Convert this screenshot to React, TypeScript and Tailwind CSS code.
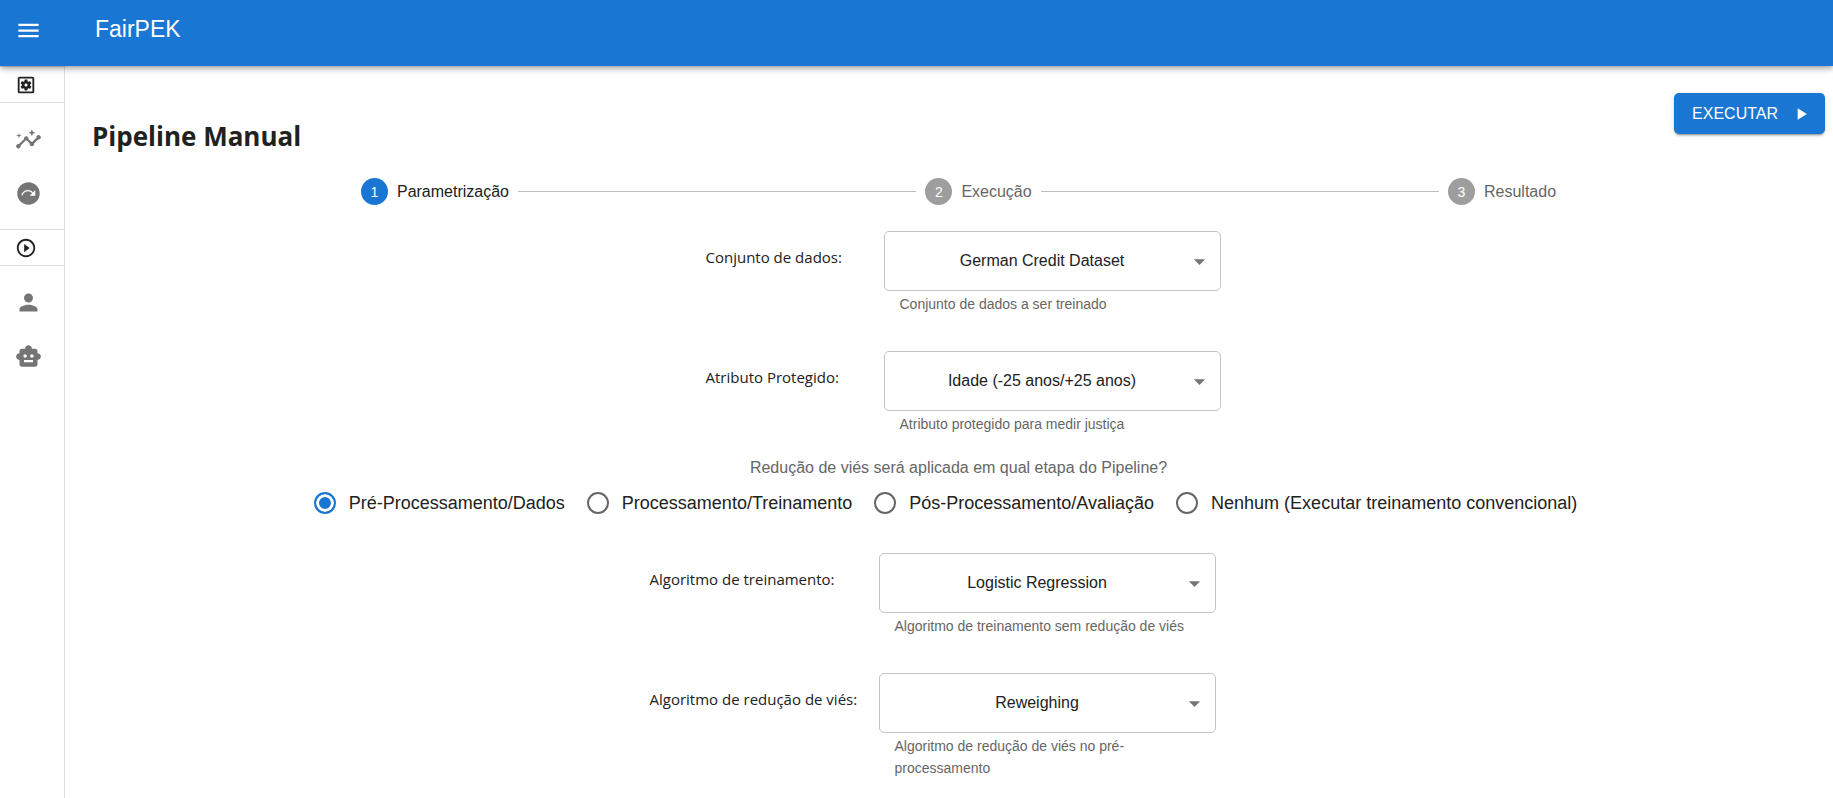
import { useState } from "react";
import type { ReactNode } from "react";
import {
  MdArrowDropDown,
  MdInsights,
  MdMenu,
  MdNextPlan,
  MdOutlineSettingsApplications,
  MdPerson,
  MdPlayArrow,
  MdPlayCircleOutline,
  MdSmartToy,
} from "react-icons/md";

const steps = ["Parametrização", "Execução", "Resultado"];

const stages = [
  "Pré-Processamento/Dados",
  "Processamento/Treinamento",
  "Pós-Processamento/Avaliação",
  "Nenhum (Executar treinamento convencional)",
];

function SideSection({ icon, label }: { icon: ReactNode; label: string }) {
  return (
    <button
      type="button"
      aria-label={label}
      className="flex h-[35px] w-full items-center pl-[15px] text-[22px] text-[#212121]"
    >
      {icon}
    </button>
  );
}

function SideLink({ icon, label }: { icon: ReactNode; label: string }) {
  return (
    <a
      href="#"
      aria-label={label}
      className="flex h-[54px] items-center pl-[15px] text-[27px] text-[#757575]"
    >
      {icon}
    </a>
  );
}

function Sidebar() {
  return (
    <nav className="w-[65px] shrink-0 border-r border-[#dedede] bg-white">
      <div className="border-y border-[#dedede]">
        <SideSection icon={<MdOutlineSettingsApplications />} label="Pipeline" />
      </div>
      <div className="border-b border-[#dedede] py-[9px]">
        <SideLink icon={<MdInsights />} label="Manual" />
        <SideLink icon={<MdNextPlan />} label="Automático" />
      </div>
      <div className="border-b border-[#dedede]">
        <SideSection icon={<MdPlayCircleOutline />} label="Execução" />
      </div>
      <div className="py-[9px]">
        <SideLink icon={<MdPerson />} label="Usuário" />
        <SideLink icon={<MdSmartToy />} label="Robô" />
      </div>
    </nav>
  );
}

function Stepper({ current }: { current: number }) {
  return (
    <ol className="mx-auto mt-[23px] flex w-[70%] items-center gap-[9px] px-[9px]">
      {steps.map((step, index) => (
        <li
          key={step}
          className={
            index === 0
              ? "flex items-center gap-[9px]"
              : "flex flex-auto items-center gap-[9px]"
          }
        >
          {index > 0 && <span className="h-px flex-1 bg-[#bdbdbd]" />}
          <span
            className={
              index === current
                ? "flex size-[27px] items-center justify-center rounded-full bg-[#1976d2] text-sm text-white"
                : "flex size-[27px] items-center justify-center rounded-full bg-[#9e9e9e] text-sm text-white"
            }
          >
            {index + 1}
          </span>
          <span
            className={
              index === current
                ? "text-base text-[#212121]"
                : "text-base text-[#666666]"
            }
          >
            {step}
          </span>
        </li>
      ))}
    </ol>
  );
}

type FieldProps = {
  id: string;
  label: string;
  options: string[];
  helper: string;
  labelWidth: string;
};

function SelectField({ id, label, options, helper, labelWidth }: FieldProps) {
  return (
    <div className="flex items-start">
      <label
        htmlFor={id}
        className={`${labelWidth} mt-[14px] shrink-0 font-['Open_Sans',sans-serif] text-[15px] leading-6 whitespace-nowrap text-[#212121]`}
      >
        {label}
      </label>
      <div className="w-[337px]">
        <div className="relative">
          <select
            id={id}
            aria-describedby={`${id}-helper`}
            className="block h-[60px] w-full appearance-none rounded-[5px] border border-[#c4c4c4] bg-white pr-9 pl-4 text-base text-[#212121] [text-align-last:center]"
          >
            {options.map((option) => (
              <option key={option}>{option}</option>
            ))}
          </select>
          <MdArrowDropDown className="pointer-events-none absolute top-[17px] right-2 size-[27px] text-[#757575]" />
        </div>
        <p
          id={`${id}-helper`}
          className="mx-4 mt-[2px] text-sm leading-[22px] text-[#666666]"
        >
          {helper}
        </p>
      </div>
    </div>
  );
}

export default function App() {
  const [stage, setStage] = useState(stages[0]);

  return (
    <div className="flex min-h-screen flex-col bg-white font-['Liberation_Sans',Arial,sans-serif] text-[#212121]">
      <header className="z-10 flex h-[66px] items-center bg-[#1976d2] pl-[15px] text-white shadow-[0_2px_4px_-1px_rgba(0,0,0,0.2),0_4px_5px_0_rgba(0,0,0,0.14),0_1px_10px_0_rgba(0,0,0,0.12)]">
        <button type="button" aria-label="Abrir menu" className="mt-[-6px] text-[27px]">
          <MdMenu />
        </button>
        <span className="mt-[-8px] ml-[53px] text-[23px] leading-9">FairPEK</span>
      </header>

      <div className="flex flex-1">
        <Sidebar />
        <main className="min-w-0 flex-1 pt-[27px] pr-2 pl-[27px]">
          <div className="flex items-start justify-between">
            <h1 className="mt-[25px] mb-px font-['Open_Sans',sans-serif] text-[26px] leading-9 font-bold">
              Pipeline Manual
            </h1>
            <button
              type="button"
              className="flex h-[41px] items-center gap-[13px] rounded-[5px] bg-[#1976d2] pr-[14px] pl-[18px] text-base text-white shadow-[0_3px_1px_-2px_rgba(0,0,0,0.2),0_2px_2px_0_rgba(0,0,0,0.14),0_1px_5px_0_rgba(0,0,0,0.12)]"
            >
              EXECUTAR
              <MdPlayArrow className="size-5" />
            </button>
          </div>

          <Stepper current={0} />

          <form>
            <div className="mt-[26px] flex justify-center pl-[9px]">
              <div className="flex flex-col gap-9">
                <SelectField
                  id="dataset"
                  label="Conjunto de dados:"
                  options={["German Credit Dataset"]}
                  helper="Conjunto de dados a ser treinado"
                  labelWidth="w-[178px]"
                />
                <SelectField
                  id="protected"
                  label="Atributo Protegido:"
                  options={["Idade (-25 anos/+25 anos)"]}
                  helper="Atributo protegido para medir justiça"
                  labelWidth="w-[178px]"
                />
              </div>
            </div>

            <fieldset className="mt-[21px]">
              <legend className="mx-auto text-base leading-6 text-[#666666]">
                Redução de viés será aplicada em qual etapa do Pipeline?
              </legend>
              <div className="flex h-[46px] items-center justify-center gap-[22px] pr-[26px]">
                {stages.map((name) => (
                  <label
                    key={name}
                    className="flex items-center gap-[13px] text-lg leading-6 whitespace-nowrap"
                  >
                    <input
                      type="radio"
                      name="stage"
                      checked={stage === name}
                      onChange={() => setStage(name)}
                      className="size-[22px] shrink-0 appearance-none rounded-full border-2 border-[#666666] checked:border-[#1976d2] checked:bg-[#1976d2] checked:shadow-[inset_0_0_0_3px_white]"
                    />
                    {name}
                  </label>
                ))}
              </div>
            </fieldset>

            <div className="mt-[27px] flex justify-center pr-[52px]">
              <div className="flex flex-col gap-9">
                <SelectField
                  id="training"
                  label="Algoritmo de treinamento:"
                  options={["Logistic Regression"]}
                  helper="Algoritmo de treinamento sem redução de viés"
                  labelWidth="w-[229px]"
                />
                <SelectField
                  id="mitigation"
                  label="Algoritmo de redução de viés:"
                  options={["Reweighing"]}
                  helper="Algoritmo de redução de viés no pré-processamento"
                  labelWidth="w-[229px]"
                />
              </div>
            </div>
          </form>
        </main>
      </div>
    </div>
  );
}
